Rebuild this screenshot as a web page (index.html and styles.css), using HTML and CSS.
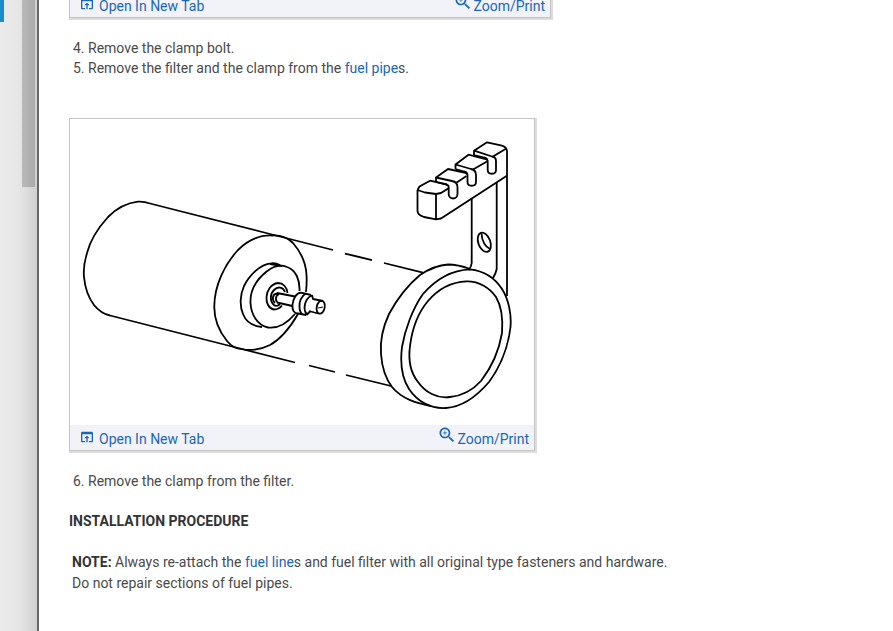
FILE: index.html
```html
<!DOCTYPE html>
<html lang="en">
<head>
    <meta charset="UTF-8">
    <meta name="viewport" content="width=device-width, initial-scale=1.0">
    <title>Fuel Filter - Removal and Installation</title>
    <link rel="stylesheet" href="styles.css">
</head>
<body>

    <div class="page">
        <aside class="side-panel">
            <div class="side-tab"></div>
            <div class="side-thumb"></div>
        </aside>

        <main class="content">
            <!-- End of the previous figure -->
            <div class="figure figure-wide">
                <div class="figure-bar">
                    <a href="#" class="open-link">
                        <svg class="icon-open" viewBox="0 0 24 24"><path d="M19 4H5c-1.11 0-2 .9-2 2v12c0 1.1.89 2 2 2h4v-2H5V8h14v10h-4v2h4c1.1 0 2-.9 2-2V6c0-1.1-.89-2-2-2zm-7 6l-4 4h3v6h2v-6h3l-4-4z"/></svg>
                        Open In New Tab
                    </a>
                    <a href="#" class="zoom-link">
                        <svg class="icon-zoom" viewBox="0 0 24 24"><path d="M15.5 14h-.79l-.28-.27C15.41 12.59 16 11.11 16 9.5 16 5.91 13.09 3 9.5 3S3 5.91 3 9.5 5.91 16 9.5 16c1.61 0 3.09-.59 4.23-1.57l.27.28v.79l5 4.99L20.49 19l-4.99-5zm-6 0C7.01 14 5 11.99 5 9.5S7.01 5 9.5 5 14 7.01 14 9.5 11.99 14 9.5 14zm2.5-4h-2v2H9v-2H7V9h2V7h1v2h2v1z"/></svg>
                        Zoom/Print
                    </a>
                </div>
            </div>

            <ol class="steps steps-remove" start="4">
                <li>Remove the clamp bolt.</li>
                <li>Remove the filter and the clamp from the <a href="#">fuel pipe</a>s.</li>
            </ol>

            <div class="figure">
                <svg class="drawing" viewBox="70 119 464 306" role="img" aria-label="Fuel filter and clamp">
                    <!-- Filter body -->
                    <path d="M150 203.500C146 202 142 201.500 138 201.700C126 203 115 210 108 217C99 227 90 241 87 253C84 263 83.500 272 84 277C85 288 88 297 94 305C98 310 103 314 110 315.500"/>
                    <path d="M150 203.500L270 234L333 250M345 253.500L372 260M384 263L423 272.700"/>
                    <path d="M110 315.500L230 346L295 362.500M309 365.500L335 372M346 375L391 386"/>
                    <path d="M272 235.500C281 235 288 238 293 243C299 250 306 262 306.500 275C307 282 306.500 287 306 292M298 314C291 326 281 339 270 345C260 350 249 351 242 349C236 349 231 346 227 341C219 331 214 319 214.300 306C214.500 285 225 264 238 250C248 240 260 235 272 235.500"/>
                    <path d="M280 265C277 263.500 274 263 271 263.300C260 264 249 276 244 286C240 295 239.500 306 243 314C246 322 252 326 262 327M270 264L282 266"/>
                    <path d="M299.500 291C300 280 296 270 287 267C280 264 272 267 266 272C255 281 250 292 250.500 303C251 314 257 325 268 327.500C279 329 289 321 295 314"/>
                    <path d="M287.500 293C287 287 283 283 278 283C271 284 267 290 266.500 297C266 303 269 309 274 309.500C277 309.500 280 308 282 305.500"/>
                    <path d="M285 292C283 287 278 286 274 290C270 294 270 301 273 304C275 307 278 306 280 304"/>
                    <path d="M277 293.500C273 294 271 299 275 303M279 294C275 296 275 301 278.500 303M277 293L295 296.500M277 302.500L292.500 306"/>
                    <path d="M301 292.700C296 293 293 299 292.500 305C292 310 294 313.500 298 313.500L306 315M301 292.700L311 295M306 293.500C301 296 299 302 299.500 307C299.500 311 301 313.500 303 314.500M312 295.500C307 297 304.500 303 304.500 308C304.500 311 306 313.500 307 314.500L310 311.500M312 295L313 299L323 301M309 311L318 313.500"/>
                    <ellipse cx="320.700" cy="307.300" rx="4" ry="6.500" transform="rotate(12 320.700 307.300)"/>
                    <path class="thin" d="M318 308L323 307"/>

                    <!-- Clamp ring -->
                    <path d="M470 269C462 266 455 264.500 448 264.500C438 265 429 269 420 275C408 285 396 301 389 314C383 327 380 342 381 354C382 368 386 379 392 387C402 399 416 403 431 406"/>
                    <path d="M470 269.300C485 271 495 278 502 289C509 300 511.500 315 510.500 327C508 348 500 367 489 382C477 396 462 407 446 408C430 409 417 401 409 389C402 378 400 363 402 347C405 329 413 308 423 294C436 279 453 270 470 269.300Z"/>
                    <path d="M466.500 281.300C479 281 490 288 496 297C502 307 503 320 502 333C499 351 491 368 481 381C472 391 460 396 450 397C437 399 425 392 418 382C410 372 408 361 410 346C412 330 417 314 428 301C438 289 452 282 466.500 281.300Z"/>

                    <!-- Bracket -->
                    <path d="M417.500 190V211C417.500 214 421 216 424 217L436 219.300L441 218.500L506.500 176M436 194V219M417.500 190L419.500 186.500L430 180.700L447 184.500M417.500 190L425 192.500L436 194L441 193L449 188"/>
                    <path d="M436 182V177.500L448 169L466.500 173M436 177.500L452 181Q457.500 182 457.500 187V194C457.500 200 448.700 200 448.700 194V187Q448.500 185 446 184.500L436 182M456 183L466.500 176"/>
                    <path d="M455.500 169V164.500L468.500 154.700L486.500 159.500M455.500 164.500L471 169Q476 170 476 175V182C476 187 467.500 187 467.500 182V175Q467 172 464 171.500L455.500 169M473 169.500L487 161.500"/>
                    <path d="M474 155V150.700L487 142.300L502 145.700Q506.500 147 507 151V296M474 150.700L492 156.500Q496 157 496 161V170C496 175 487.700 175 487.700 170V161Q487 158 484 157.500L474 155M493 156.500L505.500 149"/>
                    <path d="M471.700 198V263Q471.500 266 469 270M496.700 182V269Q496 273 493 278"/>
                    <ellipse cx="484.300" cy="242.300" rx="6" ry="10" transform="rotate(-20 484.300 242.300)"/>
                    <path d="M481.500 233.500C482 240 484 246 490 249"/>
                </svg>
                <div class="figure-bar">
                    <a href="#" class="open-link">
                        <svg class="icon-open" viewBox="0 0 24 24"><path d="M19 4H5c-1.11 0-2 .9-2 2v12c0 1.1.89 2 2 2h4v-2H5V8h14v10h-4v2h4c1.1 0 2-.9 2-2V6c0-1.1-.89-2-2-2zm-7 6l-4 4h3v6h2v-6h3l-4-4z"/></svg>
                        Open In New Tab
                    </a>
                    <a href="#" class="zoom-link">
                        <svg class="icon-zoom" viewBox="0 0 24 24"><path d="M15.5 14h-.79l-.28-.27C15.41 12.59 16 11.11 16 9.5 16 5.91 13.09 3 9.5 3S3 5.91 3 9.5 5.91 16 9.5 16c1.61 0 3.09-.59 4.23-1.57l.27.28v.79l5 4.99L20.49 19l-4.99-5zm-6 0C7.01 14 5 11.99 5 9.5S7.01 5 9.5 5 14 7.01 14 9.5 11.99 14 9.5 14zm2.5-4h-2v2H9v-2H7V9h2V7h1v2h2v1z"/></svg>
                        Zoom/Print
                    </a>
                </div>
            </div>

            <ol class="steps" start="6">
                <li>Remove the clamp from the filter.</li>
            </ol>

            <h2>INSTALLATION PROCEDURE</h2>

            <p class="note"><strong>NOTE:</strong> Always re-attach the <a href="#">fuel line</a>s and fuel filter with all original type fasteners and hardware.<br>Do not repair sections of fuel pipes.</p>
        </main>
    </div>

</body>
</html>
```

FILE: styles.css
```css
body {
    margin: 0;
    font-family: Roboto, sans-serif;
    font-size: 14px;
    line-height: 20px;
    color: #4a4a4a;
    background-color: #fff;
    overflow: hidden;
}

a {
    color: #1a66b8;
    text-decoration: none;
}

a:hover {
    text-decoration: underline;
}

.page {
    display: flex;
    min-height: 100vh;
}

.side-panel {
    display: flex;
    justify-content: space-between;
    align-items: flex-start;
    box-sizing: border-box;
    width: 39px;
    padding-right: 2px;
    border-right: 2px solid #666;
    background: linear-gradient(to right, #ebebeb, #e6e6e6 50%, #cfcfcf);
}

.side-tab {
    width: 4px;
    height: 22px;
    background-color: #1e8bc9;
}

.side-thumb {
    width: 13px;
    height: 187px;
    background: linear-gradient(to right, #b9b9b9, #a9a9a9);
}

.content {
    flex: 1;
    padding: 0 30px;
}

.figure {
    width: fit-content;
    border: 1px solid #c4c4c4;
    box-shadow: 1px 1px 0 1px #dcdcdc;
}

/* scrolled partly out of view */
.figure-wide {
    width: 480px;
    margin-top: -9px;
}

.drawing {
    display: block;
    width: 464px;
    height: 306px;
    fill: none;
    stroke: #000;
    stroke-width: 1.8;
    stroke-linejoin: round;
}

.drawing .thin {
    stroke-width: 1;
}

.figure-bar {
    display: flex;
    justify-content: space-between;
    box-sizing: border-box;
    height: 25px;
    padding: 2px 5px 0 9px;
    background-color: #f2f3f8;
}

.open-link, .zoom-link {
    display: flex;
    align-items: center;
}

.open-link {
    gap: 4px;
}

.icon-open {
    width: 16px;
    height: 16px;
    margin-bottom: 3px;
    fill: #1a66b8;
}

.icon-zoom {
    width: 20px;
    height: 20px;
    margin-bottom: 8px;
    fill: #1a66b8;
}

.steps {
    margin: 20px 0;
    padding-left: 19px;
}

.steps-remove {
    margin-bottom: 40px;
}

h2 {
    margin: 20px 0;
    font-size: 14px;
    line-height: 20px;
    color: #333;
}

.note {
    margin: 21px 0;
    padding-left: 3px;
    line-height: 21px;
}

.note strong {
    color: #333;
}
```
